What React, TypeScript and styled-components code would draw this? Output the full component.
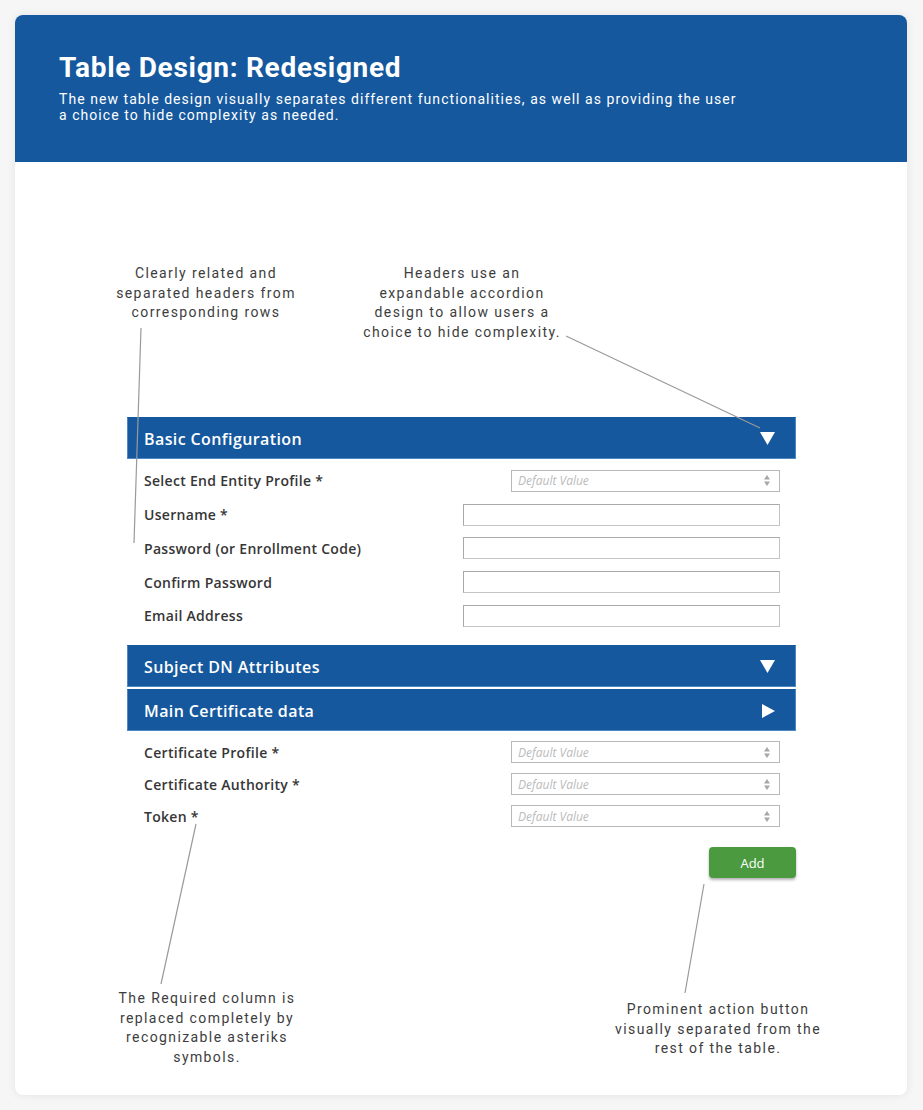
import React from "react";
import styled, { createGlobalStyle } from "styled-components";

const Global = createGlobalStyle`
  html, body { margin: 0; padding: 0; background: #f6f6f6; }
  body { font-family: Roboto, "Liberation Sans", sans-serif; }
  * { box-sizing: border-box; }
`;

const Page = styled.div`
  padding: 15px 16px 15px 15px;
`;

const Card = styled.div`
  position: relative;
  width: 892px;
  background: #ffffff;
  border-radius: 8px;
  box-shadow: 0 0 10px rgba(0, 0, 0, 0.08);
  overflow: hidden;
`;

const Hero = styled.header`
  background: #15589e;
  padding: 37px 44px 0 44px;
  height: 147px;
`;

const Title = styled.h1`
  margin: 0;
  font-family: Roboto, sans-serif;
  font-weight: 700;
  font-size: 28px;
  line-height: 32px;
  letter-spacing: 0.7px;
  color: #ffffff;
`;

const Subtitle = styled.p`
  margin: 7px 0 0 0;
  font-family: Roboto, sans-serif;
  font-size: 14px;
  line-height: 16px;
  letter-spacing: 1.05px;
  color: #ffffff;
`;

const Body = styled.div`
  padding: 102px 111px 28px 112px;
`;

const NoteRow = styled.div<{ $pad: number; $gap: number }>`
  display: flex;
  align-items: flex-start;
  margin-left: ${(p) => p.$pad}px;
  gap: ${(p) => p.$gap}px;
`;

const Note = styled.div<{ $w: number; $top?: number }>`
  flex-shrink: 0;
  width: ${(p) => p.$w}px;
  margin-top: ${(p) => p.$top ?? 0}px;
  text-align: center;
  font-family: Roboto, sans-serif;
  font-size: 14px;
  line-height: 19.5px;
  letter-spacing: 1.4px;
  color: #3d3d3d;
  white-space: nowrap;
`;

const Form = styled.section`
  margin-top: 75px;
  width: 669px;
  display: flex;
  flex-direction: column;
`;

const SectionHeader = styled.div<{ $gap?: number }>`
  height: 42px;
  margin-top: ${(p) => p.$gap ?? 0}px;
  background: #15589e;
  border: 1px solid #4f86c4;
  border-top-color: #15589e;
  display: flex;
  align-items: center;
  justify-content: space-between;
  padding: 1px 20px 0 16px;
  font-family: "Open Sans", sans-serif;
  font-weight: 600;
  font-size: 16px;
  letter-spacing: 0.4px;
  color: #ffffff;
`;

const Rows = styled.div<{ $top: number; $bottom: number }>`
  display: flex;
  flex-direction: column;
  padding: ${(p) => p.$top}px 16px ${(p) => p.$bottom}px 17px;
`;

const Row = styled.div<{ $h: number }>`
  height: ${(p) => p.$h}px;
  display: flex;
  align-items: center;
  justify-content: space-between;
`;

const Label = styled.span`
  font-family: "Open Sans", sans-serif;
  font-weight: 600;
  font-size: 14px;
  letter-spacing: 0.3px;
  color: #363636;
`;

const TextBox = styled.div`
  width: 317px;
  height: 22px;
  border: 1px solid #a9a9a9;
  border-right-color: #c4c4c4;
  border-bottom-color: #c4c4c4;
  background: #fff;
`;

const SelectBox = styled.div`
  width: 269px;
  height: 22px;
  border: 1px solid #b8b8b8;
  background: #fff;
  display: flex;
  align-items: center;
  justify-content: space-between;
  padding: 0 9px 0 6px;
  font-family: "Open Sans", sans-serif;
  font-style: italic;
  font-size: 12px;
  color: #bbbbbb;
`;

const ButtonRow = styled.div`
  display: flex;
  justify-content: flex-end;
  margin-top: 14px;
`;

const AddButton = styled.button`
  width: 87px;
  height: 31px;
  border: none;
  border-radius: 4px;
  background: #4b9a3f;
  color: #ffffff;
  font-family: "Open Sans", sans-serif;
  font-size: 13px;
  box-shadow: 0 2px 3px rgba(0, 0, 0, 0.3);
  cursor: pointer;
`;

const Overlay = styled.svg`
  position: absolute;
  left: 0;
  top: 0;
  pointer-events: none;
`;

const BottomNotes = styled(NoteRow)`
  margin-top: 111px;
`;

const Caret = ({ dir }: { dir: "down" | "right" }) =>
  dir === "down" ? (
    <svg width="15" height="13" viewBox="0 0 15 13">
      <polygon points="0,0 15,0 7.5,13" fill="#fff" />
    </svg>
  ) : (
    <svg width="13" height="14" viewBox="0 0 13 14">
      <polygon points="0,0 13,7 0,14" fill="#fff" />
    </svg>
  );

const Spinner = () => (
  <svg width="6" height="11" viewBox="0 0 6 11">
    <polygon points="3,0 6,4.5 0,4.5" fill="#a8a8a8" />
    <polygon points="0,6.5 6,6.5 3,11" fill="#a8a8a8" />
  </svg>
);

const Select = () => (
  <SelectBox>
    <span>Default Value</span>
    <Spinner />
  </SelectBox>
);

export default function App() {
  return (
    <>
      <Global />
      <Page>
        <Card>
          <Hero>
            <Title>Table Design: Redesigned</Title>
            <Subtitle>
              The new table design visually separates different functionalities, as well as providing the user
              <br />
              a choice to hide complexity as needed.
            </Subtitle>
          </Hero>
          <Body>
            <NoteRow $pad={-21} $gap={46}>
              <Note $w={200}>
                Clearly related and
                <br />
                separated headers from
                <br />
                corresponding rows
              </Note>
              <Note $w={220}>
                Headers use an
                <br />
                expandable accordion
                <br />
                design to allow users a
                <br />
                choice to hide complexity.
              </Note>
            </NoteRow>
            <Form>
              <SectionHeader>
                <span>Basic Configuration</span>
                <Caret dir="down" />
              </SectionHeader>
              <Rows $top={5} $bottom={12.25}>
                <Row $h={33.75}>
                  <Label>Select End Entity Profile *</Label>
                  <Select />
                </Row>
                <Row $h={33.75}>
                  <Label>Username *</Label>
                  <TextBox />
                </Row>
                <Row $h={33.75}>
                  <Label>Password (or Enrollment Code)</Label>
                  <TextBox />
                </Row>
                <Row $h={33.75}>
                  <Label>Confirm Password</Label>
                  <TextBox />
                </Row>
                <Row $h={33.75}>
                  <Label>Email Address</Label>
                  <TextBox />
                </Row>
              </Rows>
              <SectionHeader>
                <span>Subject DN Attributes</span>
                <Caret dir="down" />
              </SectionHeader>
              <SectionHeader $gap={2}>
                <span>Main Certificate data</span>
                <Caret dir="right" />
              </SectionHeader>
              <Rows $top={5} $bottom={1}>
                <Row $h={32}>
                  <Label>Certificate Profile *</Label>
                  <Select />
                </Row>
                <Row $h={32}>
                  <Label>Certificate Authority *</Label>
                  <Select />
                </Row>
                <Row $h={32}>
                  <Label>Token *</Label>
                  <Select />
                </Row>
              </Rows>
              <ButtonRow>
                <AddButton>Add</AddButton>
              </ButtonRow>
            </Form>
            <BottomNotes $pad={-15} $gap={311}>
              <Note $w={190}>
                The Required column is
                <br />
                replaced completely by
                <br />
                recognizable asteriks
                <br />
                symbols.
              </Note>
              <Note $w={210} $top={11}>
                Prominent action button
                <br />
                visually separated from the
                <br />
                rest of the table.
              </Note>
            </BottomNotes>
          </Body>
          <Overlay width="892" height="1080" viewBox="0 0 892 1080">
            <g stroke="#9a9a9a" strokeWidth="1.2" fill="none">
              <line x1="126" y1="313" x2="119" y2="528" />
              <line x1="551" y1="321" x2="745" y2="413" />
              <line x1="181" y1="809" x2="146" y2="969" />
              <line x1="689" y1="869" x2="670" y2="978" />
            </g>
          </Overlay>
        </Card>
      </Page>
    </>
  );
}
